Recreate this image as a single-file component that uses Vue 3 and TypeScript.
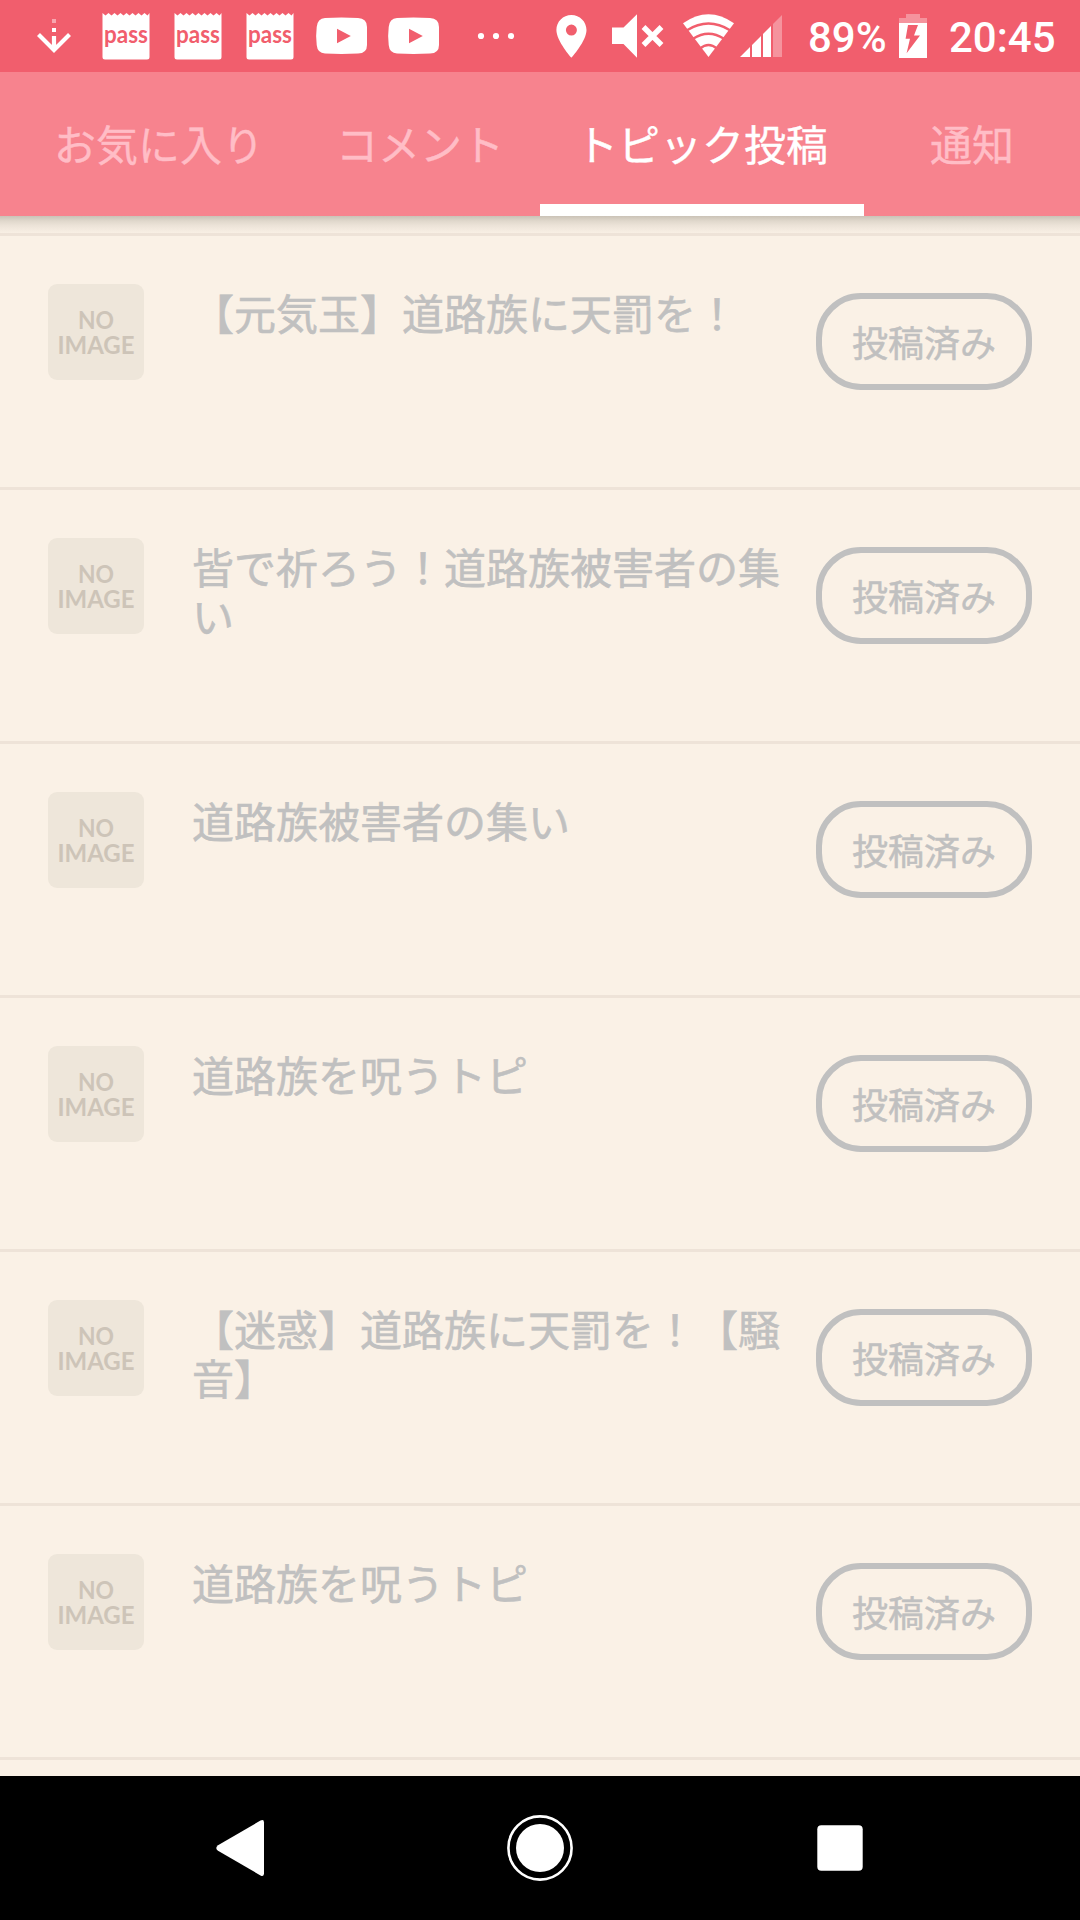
<script setup lang="ts">
interface Tab {
  label: string
  active: boolean
}

interface Topic {
  id: number
  title: string
}

const tabs: Tab[] = [
  { label: 'お気に入り', active: false },
  { label: 'コメント', active: false },
  { label: 'トピック投稿', active: true },
  { label: '通知', active: false },
]

const topics: Topic[] = [
  { id: 1, title: '【元気玉】道路族に天罰を！' },
  { id: 2, title: '皆で祈ろう！道路族被害者の集い' },
  { id: 3, title: '道路族被害者の集い' },
  { id: 4, title: '道路族を呪うトピ' },
  { id: 5, title: '【迷惑】道路族に天罰を！【騒音】' },
  { id: 6, title: '道路族を呪うトピ' },
]
</script>

<template>
  <div class="screen">
    <header class="status">
      <svg class="slot" viewBox="18 0 72 72" width="72" height="72">
        <rect x="52" y="19" width="4" height="4" fill="#fff" opacity=".45" />
        <rect x="52" y="28" width="4" height="4" fill="#fff" />
        <path d="M54 36v14M38.500 34.500L54 50l15.500-15.500" fill="none" stroke="#fff" stroke-width="4.200" />
      </svg>
      <svg v-for="n in 3" :key="'p' + n" class="slot" viewBox="90 0 72 72" width="72" height="72">
        <path
          d="M102.500 13l3 2.500 3-2.500 3 2.500 3-2.500 3 2.500 3-2.500 3 2.500 3-2.500 3 2.500 3-2.500 3 2.500 3-2.500 3 2.500 3-2.500 3 2.500 2-2.500V57q0 2.500-2.500 2.500h-42q-2.500 0-2.500-2.500z"
          fill="#fff"
        />
        <text x="104" y="43" class="pass" textLength="44" lengthAdjust="spacingAndGlyphs">pass</text>
      </svg>
      <svg v-for="n in 2" :key="'y' + n" class="slot" viewBox="306 0 72 72" width="72" height="72">
        <path
          fill-rule="evenodd"
          d="M325 18Q341.500 17 358 18Q367 18.300 367 27V45Q367 53.400 358 53.500Q341.500 54.300 325 53.500Q317.500 53.200 316.700 45Q315.600 36 316.700 27Q317.500 18.300 325 18zM337 28.700V43.300L350.800 36z"
          fill="#fff"
        />
      </svg>
      <svg class="slot" viewBox="450 0 90 72" width="90" height="72">
        <g fill="#fff">
          <circle cx="481" cy="36" r="3.100" />
          <circle cx="496" cy="36" r="3.100" />
          <circle cx="511" cy="36" r="3.100" />
        </g>
      </svg>
      <svg class="slot" viewBox="540 0 60 72" width="60" height="72">
        <path
          fill-rule="evenodd"
          d="M571.400 15C563 15 556.400 21.700 556.400 30C556.400 41 571.400 57.800 571.400 57.800S586.500 41 586.500 30C586.500 21.700 579.800 15 571.400 15zM571.400 24.600a5.500 5.500 0 1 1 0 11a5.500 5.500 0 1 1 0-11z"
          fill="#fff"
        />
      </svg>
      <svg class="slot" viewBox="600 0 72 72" width="72" height="72">
        <path d="M612 27.500h11.500L637 14.300v43.400L623.500 44H612z" fill="#fff" />
        <path d="M643.500 27l18 18M661.500 27l-18 18" stroke="#fff" stroke-width="5.400" />
      </svg>
      <svg class="slot" viewBox="672 0 66 72" width="66" height="72">
        <path d="M708.500 57L683 23.300Q708.500 5.300 734 23.300z" fill="#fff" />
        <g fill="none" stroke="#f15e6d" stroke-width="2.300">
          <path d="M687 30.200Q708.500 16.800 730 30.200" />
          <path d="M693 38.700Q708.500 28.800 724 38.700" />
          <path d="M700 48.500Q708.500 41.500 717 48.500" />
        </g>
      </svg>
      <svg class="slot" viewBox="738 0 60 72" width="60" height="72">
        <g fill="#fff">
          <path d="M740 57l10-10v10zM752 57V45l9-9v21zM763 57V34l8-8v31z" />
          <path d="M773 57V24l9-9v42z" opacity=".33" />
        </g>
      </svg>
      <span class="percent">89%</span>
      <svg class="slot" viewBox="892 0 44 72" width="44" height="72">
        <path d="M899 23v-5h7v-4h14v4h7v5z" fill="#fff" opacity=".33" />
        <path
          fill-rule="evenodd"
          d="M899 23h28v35h-28zM908 25L905.600 38.700H910L906.600 53.300L920 35.500H914L918 25z"
          fill="#fff"
        />
      </svg>
      <span class="clock">20:45</span>
    </header>

    <nav class="tabs">
      <div v-for="tab in tabs" :key="tab.label" class="tab" :class="{ active: tab.active }">
        {{ tab.label }}
      </div>
    </nav>

    <main class="list">
      <article v-for="topic in topics" :key="topic.id" class="row">
        <svg class="thumb" viewBox="0 0 96 96" width="96" height="96">
          <rect width="96" height="96" rx="9" fill="#eee6da" />
          <text>
            <tspan x="30" y="44.500" textLength="36" lengthAdjust="spacingAndGlyphs">NO</tspan>
            <tspan x="9.500" y="69.500" textLength="77" lengthAdjust="spacingAndGlyphs">IMAGE</tspan>
          </text>
        </svg>
        <h2 class="title">{{ topic.title }}</h2>
        <button class="posted" type="button">投稿済み</button>
      </article>
    </main>

    <footer class="navbar">
      <svg viewBox="0 0 72 72" width="72" height="72">
        <path d="M14 33.200L56.500 8.600Q60 7 60 10.500V61.500Q60 65 56.500 63.400L14 38.800Q10.500 36 14 33.200z" fill="#fff" />
      </svg>
      <svg viewBox="0 0 72 72" width="72" height="72">
        <circle cx="36" cy="36" r="31.600" fill="none" stroke="#fff" stroke-width="2.600" />
        <circle cx="36" cy="36" r="24" fill="#fff" />
      </svg>
      <svg viewBox="0 0 72 72" width="72" height="72">
        <rect x="13.300" y="13.300" width="45.400" height="45.400" rx="4" fill="#fff" />
      </svg>
    </footer>
  </div>
</template>

<style>
body {
  margin: 0;
}
</style>

<style scoped>
.screen {
  width: 1080px;
  height: 1920px;
  display: flex;
  flex-direction: column;
  overflow: hidden;
  background: #faf1e6;
  font-family: 'Noto Sans CJK JP', sans-serif;
}

.status {
  flex: none;
  height: 72px;
  padding-left: 18px;
  display: flex;
  background: #f15e6d;
  color: #fff;
  font: 500 42px/76px Roboto, sans-serif;
  white-space: nowrap;
}

.slot {
  flex: none;
  display: block;
}

.pass {
  font: 700 24px Lato, sans-serif;
  fill: #f15e6d;
}

.percent {
  width: 84px;
  margin-left: 10px;
}

.clock {
  margin-left: 13px;
}

.tabs {
  flex: none;
  height: 144px;
  display: flex;
  justify-content: flex-end;
  background: #f7838e;
}

.tab {
  box-sizing: border-box;
  min-width: 216px;
  padding: 0 36px;
  border-bottom: 12px solid transparent;
  color: #ffbdc6;
  font-size: 42px;
  line-height: 142px;
  height: 144px;
  text-align: center;
  white-space: nowrap;
  -webkit-text-stroke: 0.4px currentColor;
}

.tab.active {
  border-color: #fff;
  color: #fff;
}

.list {
  flex: 1;
  min-height: 0;
  padding-top: 17px;
  background: linear-gradient(#cac2b7, #e0d8cc 5px, #ede4d9 10px, #faf1e6 18px);
}

.row {
  box-sizing: border-box;
  height: 254px;
  padding: 48px 48px 0;
  border-top: 3px solid #eee3d8;
  display: flex;
  align-items: flex-start;
}

.row:last-child {
  height: 257px;
  border-bottom: 3px solid #eee3d8;
}

.thumb {
  flex: none;
  display: block;
}

.thumb text {
  font: 700 24px Lato, sans-serif;
  fill: #cdc4b8;
}

.title {
  flex: none;
  width: 588px;
  margin: 3px 0 0 48px;
  color: #c0c0c0;
  font-size: 42px;
  font-weight: 400;
  line-height: 49px;
  text-spacing-trim: space-all;
  word-break: break-all;
  -webkit-text-stroke: 0.6px currentColor;
}

.posted {
  box-sizing: border-box;
  flex: none;
  width: 216px;
  height: 97px;
  margin: 9px 0 0 36px;
  padding: 0;
  border: 6px solid #c0c0c0;
  border-radius: 45px;
  background: none;
  color: #c0c0c0;
  font: 400 36px/85px 'Noto Sans CJK JP', sans-serif;
  -webkit-text-stroke: 0.5px currentColor;
}

.navbar {
  flex: none;
  height: 144px;
  display: flex;
  align-items: center;
  justify-content: center;
  gap: 228px;
  background: #000;
}
</style>
